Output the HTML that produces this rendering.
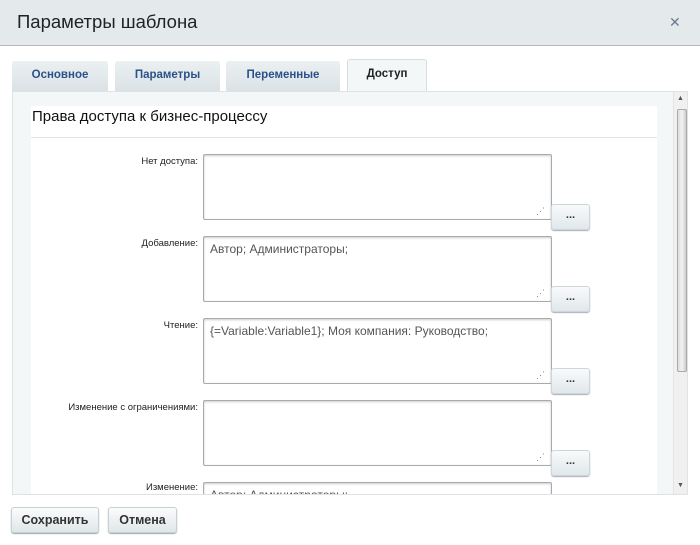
<!DOCTYPE html>
<html><head><meta charset="utf-8"><style>
*{box-sizing:border-box;margin:0;padding:0}
body{width:700px;height:545px;overflow:hidden;background:#fff;font-family:"Liberation Sans",Arial,sans-serif;position:relative}
.a{position:absolute}
.hdr{left:0;top:0;width:700px;height:46px;background:#e4eaec;border-bottom:1px solid #b4b9bc}
.ttl{left:17px;top:11px;font-size:18.5px;color:#222}
.x{left:669px;top:14px;font-size:14px;color:#6a7b90}
.tab{top:61px;height:30px;background:linear-gradient(#ebf0f2,#dbe2e5);border-radius:3px 3px 0 0;font-size:11.5px;font-weight:bold;color:#2a5189;text-align:center;line-height:29px}
.tab.on{top:59px;height:33px;background:#f3f7f8;color:#222;border:1px solid #d7dee2;border-bottom:none}
.body{left:12px;top:91px;width:676px;height:404px;background:#f3f7f8;border:1px solid #dde3e6;overflow:hidden}
.panel{left:18px;top:14px;width:626px;height:400px;background:#fff}
.h2{left:19px;top:16px;font-size:15px;color:#111}
.sep{left:18px;top:45px;width:626px;height:1px;background:#e2e6e8}
.lbl{width:185px;text-align:right;font-size:9.5px;color:#222;left:0}
.ta{left:190px;width:349px;height:66px;border:1px solid #a6abb0;border-radius:2px;background:#fff;font-size:12px;color:#555;padding:5px 6px;box-shadow:inset 0 1px 2px #ccc}
.ta:after{content:"⋰";position:absolute;right:6px;bottom:2px;font-size:9px;color:#888}
.dots{left:538px;width:39px;height:26px;border:1px solid #cfd6da;border-radius:3px;background:linear-gradient(#f8fafb,#e1e8eb);box-shadow:0 1px 1px #aab;text-align:center;font-size:11px;line-height:20px;color:#333;font-weight:bold}
.sb{left:660px;top:0;width:15px;height:404px;background:#f0f0f0;border-left:1px solid #e4e4e4}
.thumb{left:3px;top:17px;width:10px;height:263px;background:linear-gradient(90deg,#ddd,#f3f3f3,#ccc);border:1px solid #aaa;border-radius:2px}
.btn{top:507px;height:26px;border:1px solid #c9d0d4;border-radius:3px;background:linear-gradient(#fbfcfc,#e0e6e9);box-shadow:0 1px 1px #9aa;font-size:12.5px;font-weight:bold;color:#333;text-align:center;line-height:24px}
</style></head><body>
<div class="a hdr"></div>
<div class="a ttl">Параметры шаблона</div>
<div class="a x">✕</div>
<div class="a tab" style="left:12px;width:96px">Основное</div>
<div class="a tab" style="left:115px;width:105px">Параметры</div>
<div class="a tab" style="left:226px;width:114px">Переменные</div>
<div class="a tab on" style="left:347px;width:80px">Доступ</div>
<div class="a body">
 <div class="a panel"></div>
 <div class="a h2">Права доступа к бизнес-процессу</div>
 <div class="a sep"></div>
 <div class="a lbl" style="top:64px">Нет доступа:</div>
 <div class="a ta" style="top:62px"></div>
 <div class="a dots" style="top:112px">...</div>
 <div class="a lbl" style="top:146px">Добавление:</div>
 <div class="a ta" style="top:144px">Автор; Администраторы;</div>
 <div class="a dots" style="top:194px">...</div>
 <div class="a lbl" style="top:228px">Чтение:</div>
 <div class="a ta" style="top:226px">{=Variable:Variable1}; Моя компания: Руководство;</div>
 <div class="a dots" style="top:276px">...</div>
 <div class="a lbl" style="top:310px">Изменение с ограничениями:</div>
 <div class="a ta" style="top:308px"></div>
 <div class="a dots" style="top:358px">...</div>
 <div class="a lbl" style="top:390px">Изменение:</div>
 <div class="a ta" style="top:390px">Автор; Администраторы;</div>
 <div class="a sb"><div class="a" style="left:3px;top:3px;font-size:7px;color:#555">▲</div><div class="a thumb"></div><div class="a" style="left:3px;top:390px;font-size:7px;color:#555">▼</div></div>
</div>
<div class="a btn" style="left:11px;width:88px">Сохранить</div>
<div class="a btn" style="left:108px;width:69px">Отмена</div>
</body></html>
